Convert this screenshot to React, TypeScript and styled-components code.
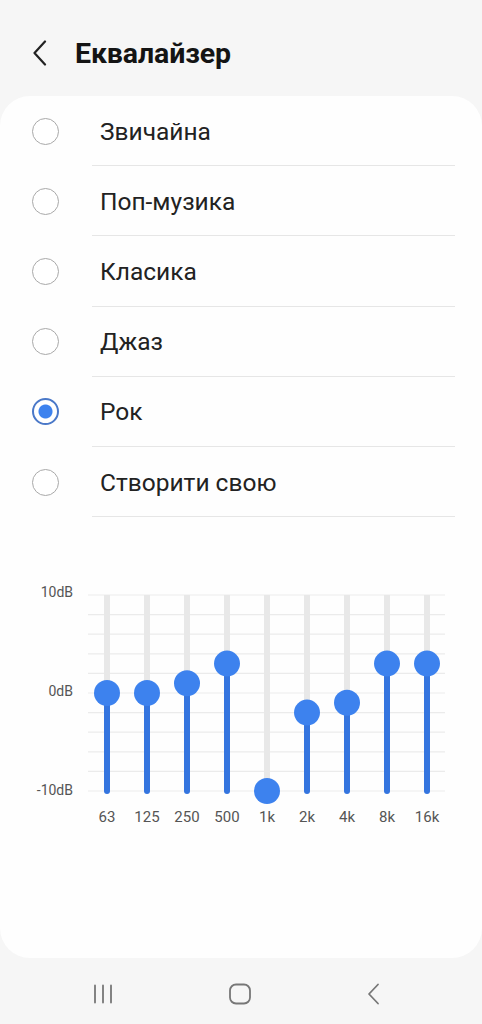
import styled, {createGlobalStyle} from "styled-components";

interface Band {
    label: string;
    value: number;
}

const presets = ["Звичайна", "Поп-музика", "Класика", "Джаз", "Рок", "Створити свою"];
const selectedPreset = 4;

const bands: Band[] = [
    {label: "63", value: 0},
    {label: "125", value: 0},
    {label: "250", value: 1},
    {label: "500", value: 3},
    {label: "1k", value: -10},
    {label: "2k", value: -2},
    {label: "4k", value: -1},
    {label: "8k", value: 3},
    {label: "16k", value: 3},
];

// chart geometry, in svg coordinates
const GRID_TOP = 55;
const GRID_BOTTOM = 251;
const ZERO_Y = (GRID_TOP + GRID_BOTTOM) / 2;
const STEP = (GRID_BOTTOM - GRID_TOP) / 20;
const FIRST_X = 107;
const BAND_GAP = 40;

const valueToY = (v: number) => ZERO_Y - v * STEP;

export default function App() {
    return (
        <Screen>
            <GlobalStyle/>
            <Header>
                <BackButton aria-label="Назад">
                    <svg width="16" height="26" viewBox="0 0 16 26">
                        <path d="M13 1.5 L2.5 13 L13 24.5" fill="none" stroke="#222" strokeWidth="2.2"
                              strokeLinecap="round" strokeLinejoin="round"/>
                    </svg>
                </BackButton>
                <Title>Еквалайзер</Title>
            </Header>
            <Card>
                <PresetList>
                    {presets.map((name, i) => (
                        <PresetRow key={name}>
                            <Radio $checked={i === selectedPreset}/>
                            <PresetLabel>{name}</PresetLabel>
                        </PresetRow>
                    ))}
                </PresetList>
                <Chart width="482" height="300" viewBox="0 0 482 300">
                    {Array.from({length: 11}).map((_, i) => {
                        const y = GRID_TOP + i * (GRID_BOTTOM - GRID_TOP) / 10;
                        return <line key={i} x1="88" x2="445" y1={y} y2={y} stroke="#ebebeb" strokeWidth="1.2"/>;
                    })}
                    <AxisText x="73" y={GRID_TOP + 2}>10dB</AxisText>
                    <AxisText x="73" y={ZERO_Y + 3}>0dB</AxisText>
                    <AxisText x="73" y={GRID_BOTTOM + 4}>-10dB</AxisText>
                    {bands.map((b, i) => {
                        const x = FIRST_X + i * BAND_GAP;
                        const y = valueToY(b.value);
                        return (
                            <g key={b.label}>
                                <line x1={x} x2={x} y1={GRID_TOP} y2={GRID_BOTTOM} stroke="#e8e8e8" strokeWidth="6"/>
                                <line x1={x} x2={x} y1={y} y2={GRID_BOTTOM} stroke="#3575df" strokeWidth="6"
                                      strokeLinecap="round"/>
                                <circle cx={x} cy={y} r="13" fill="#3d82ee"/>
                                <FreqText x={x} y="282">{b.label}</FreqText>
                            </g>
                        );
                    })}
                </Chart>
            </Card>
            <NavBar>
                <svg width="22" height="22" viewBox="0 0 22 22">
                    <path d="M3 2.5v17M11 2.5v17M19 2.5v17" stroke="#777" strokeWidth="1.8" strokeLinecap="round"/>
                </svg>
                <svg width="24" height="24" viewBox="0 0 24 24">
                    <rect x="2" y="2.5" width="20" height="19" rx="6" fill="none" stroke="#777" strokeWidth="1.8"/>
                </svg>
                <svg width="16" height="24" viewBox="0 0 16 24">
                    <path d="M12 2.5 L3 12 L12 21.5" fill="none" stroke="#777" strokeWidth="1.8"
                          strokeLinecap="round" strokeLinejoin="round"/>
                </svg>
            </NavBar>
        </Screen>
    );
}

const GlobalStyle = createGlobalStyle`
    html, body {
        margin: 0;
        padding: 0;
        background: #f6f6f6;
    }
    * {
        box-sizing: border-box;
    }
`;

const Screen = styled.div`
    width: 482px;
    height: 1024px;
    display: flex;
    flex-direction: column;
    background: #f6f6f6;
    font-family: Roboto, "Noto Sans", sans-serif;
    overflow: hidden;
`;

const Header = styled.header`
    height: 96px;
    display: flex;
    align-items: center;
    padding: 10px 0 0 32px;
`;

const BackButton = styled.button`
    border: none;
    background: none;
    padding: 0;
    width: 16px;
    height: 26px;
    display: flex;
    cursor: pointer;
`;

const Title = styled.h1`
    margin: 0 0 0 27px;
    font-size: 28.5px;
    font-weight: 700;
    color: #141414;
    letter-spacing: -0.1px;
`;

const Card = styled.main`
    height: 862px;
    background: #fefefe;
    border-radius: 30px;
    display: flex;
    flex-direction: column;
`;

const PresetList = styled.ul`
    list-style: none;
    margin: 0;
    padding: 0;
`;

const PresetRow = styled.li`
    height: 70.2px;
    display: flex;
    align-items: center;
    padding-left: 32px;
`;

const Radio = styled.span<{ $checked: boolean }>`
    width: 27px;
    height: 27px;
    border-radius: 50%;
    flex-shrink: 0;
    border: ${p => p.$checked ? "2px solid #4a78c8" : "1.6px solid #a9a9a9"};
    background: ${p => p.$checked ? "radial-gradient(circle, #3d82ee 0 6.5px, #fff 7.5px)" : "#fff"};
`;

const PresetLabel = styled.span`
    flex: 1;
    height: 100%;
    margin: 0 27px 0 33px;
    padding: 1px 0 0 8px;
    display: flex;
    align-items: center;
    font-size: 24.5px;
    color: #222;
    border-bottom: 1px solid #e6e6e6;
`;

const Chart = styled.svg`
    display: block;
    margin-top: 23px;
`;

const AxisText = styled.text`
    font-family: Roboto, sans-serif;
    font-size: 14px;
    fill: #555;
    text-anchor: end;
`;

const FreqText = styled.text`
    font-family: Roboto, sans-serif;
    font-size: 15px;
    fill: #555;
    text-anchor: middle;
`;

const NavBar = styled.nav`
    flex: 1;
    display: flex;
    align-items: center;
    justify-content: space-between;
    padding: 6px 100px 0 92px;
`;
